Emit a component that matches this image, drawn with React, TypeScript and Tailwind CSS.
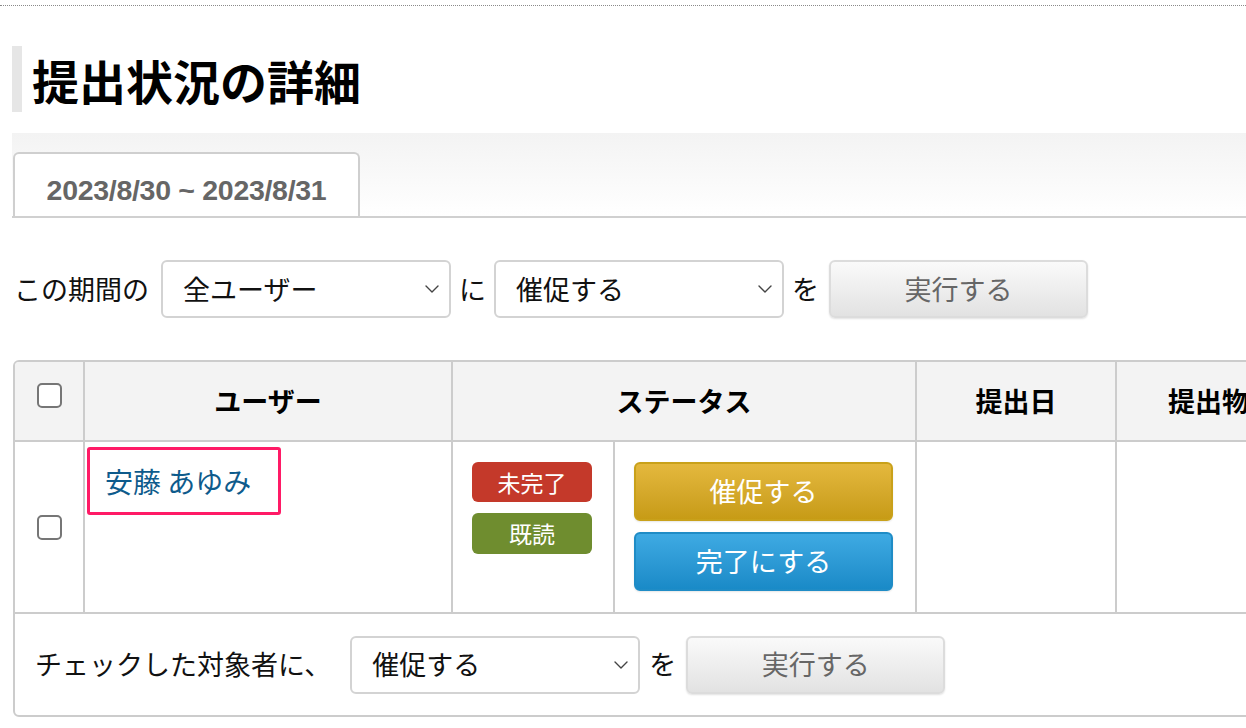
import React from 'react'

const jp = "font-['Noto_Sans_CJK_JP','Hiragino_Sans',sans-serif]"

const Chevron = () => (
  <svg width="14" height="8" viewBox="0 0 14 8" fill="none" className="shrink-0">
    <path d="M1 1l6 6 6-6" stroke="#444" strokeWidth="1.4" strokeLinecap="round" strokeLinejoin="round" />
  </svg>
)

const SelectBox = ({ label }: { label: string }) => (
  <div className="flex h-[58px] w-[290px] shrink-0 items-center justify-between rounded-md border-2 border-[#d3d3d3] bg-white pl-[20px] pr-[10px]">
    <span className="text-[27px] text-[#111]">{label}</span>
    <Chevron />
  </div>
)

const RunButton = () => (
  <button className="h-[58px] w-[259px] shrink-0 rounded-md border-2 border-[#dcdcdc] bg-gradient-to-b from-[#fafafa] to-[#e2e2e2] text-[27px] text-[#666] shadow-[0_1px_2px_rgba(0,0,0,0.12)]">
    実行する
  </button>
)

const Checkbox = () => (
  <div className="h-[25px] w-[25px] rounded-[5px] border-2 border-[#767676] bg-white" />
)

const App = () => {
  return (
    <div className={`h-[728px] w-full overflow-hidden bg-white ${jp}`}>
      <div className="h-[6px] border-b border-dotted border-[#8a8a8a]" />

      {/* page title */}
      <div className="ml-3 mt-[40px] flex h-[66px] items-center border-l-[10px] border-[#e6e6e6] pl-[10px]">
        <h1 className="text-[47px] font-bold leading-none text-black">提出状況の詳細</h1>
      </div>

      {/* period tabs */}
      <div className="ml-3 mt-[21px] flex h-[85px] items-end border-b-2 border-[#d0d0d0] bg-gradient-to-b from-[#f3f3f3] to-white pl-px">
        <div className="flex h-[64px] w-[347px] items-center justify-center rounded-t-md border-2 border-b-0 border-[#cfcfcf] bg-white pt-[10px]">
          <span className="font-['Liberation_Sans',Arial,sans-serif] text-[28.5px] font-bold tracking-[-0.3px] text-[#666]">
            2023/8/30 ~ 2023/8/31
          </span>
        </div>
      </div>

      {/* bulk action for the period */}
      <div className="ml-[14px] mt-[42px] flex items-center text-[27px] text-[#111]">
        <span className="mr-[12px]">この期間の</span>
        <SelectBox label="全ユーザー" />
        <span className="mx-[8px]">に</span>
        <SelectBox label="催促する" />
        <span className="ml-[8px] mr-[10px]">を</span>
        <RunButton />
      </div>

      {/* submission table */}
      <div className="ml-[13px] mt-[42px] w-[1450px] overflow-hidden rounded-md border-2 border-[#cccccc]">
        <table className="w-full table-fixed border-separate border-spacing-0">
          <colgroup>
            <col className="w-[70px]" />
            <col className="w-[368px]" />
            <col className="w-[162px]" />
            <col className="w-[302px]" />
            <col className="w-[200px]" />
            <col />
          </colgroup>
          <thead>
            <tr className="h-[80px] bg-[#f3f3f3] text-[27px] font-bold text-black">
              <th className="border-b-2 border-r-2 border-[#cccccc] align-middle">
                <div className="flex justify-center pb-[12px]">
                  <Checkbox />
                </div>
              </th>
              <th className="border-b-2 border-r-2 border-[#cccccc]">ユーザー</th>
              <th colSpan={2} className="border-b-2 border-r-2 border-[#cccccc]">ステータス</th>
              <th className="border-b-2 border-r-2 border-[#cccccc]">提出日</th>
              <th className="border-b-2 border-[#cccccc] text-left pl-[51px]">提出物</th>
            </tr>
          </thead>
          <tbody>
            <tr className="h-[172px]">
              <td className="border-b-2 border-r-2 border-[#cccccc] align-middle">
                <div className="flex justify-center">
                  <Checkbox />
                </div>
              </td>
              <td className="border-b-2 border-r-2 border-[#cccccc] align-top">
                <div className="ml-[2px] mt-[5px] flex h-[68px] w-[194px] items-center rounded-[3px] border-[3px] border-[#ff1a66] pl-[15px]">
                  <a className="text-[28px] text-[#0e5b8c]">安藤 あゆみ</a>
                </div>
              </td>
              <td className="border-b-2 border-r-2 border-[#cccccc] align-top">
                <div className="ml-[19px] mt-[20px] flex flex-col gap-[11px]">
                  <span className="flex h-[40px] w-[120px] items-center justify-center rounded-md bg-[#c4392a] text-[23px] text-white">未完了</span>
                  <span className="flex h-[41px] w-[120px] items-center justify-center rounded-md bg-[#6f8d2f] text-[23px] text-white">既読</span>
                </div>
              </td>
              <td className="border-b-2 border-r-2 border-[#cccccc] align-top">
                <div className="ml-[19px] mt-[20px] flex flex-col gap-[11px]">
                  <button className="h-[59px] w-[259px] rounded-md border-2 border-[#c9a11a] bg-gradient-to-b from-[#e4b83d] to-[#c79b15] text-[27px] text-white shadow-[0_1px_2px_rgba(0,0,0,0.1)]">
                    催促する
                  </button>
                  <button className="h-[59px] w-[259px] rounded-md border-2 border-[#1f8cc6] bg-gradient-to-b from-[#3eaae3] to-[#198ac7] text-[27px] text-white shadow-[0_1px_2px_rgba(0,0,0,0.1)]">
                    完了にする
                  </button>
                </div>
              </td>
              <td className="border-b-2 border-r-2 border-[#cccccc]" />
              <td className="border-b-2 border-[#cccccc]" />
            </tr>
          </tbody>
        </table>

        {/* bulk action for checked users */}
        <div className="flex h-[101px] items-center pl-[20px] text-[27px] text-[#111]">
          <span className="mr-[19px]">チェックした対象者に、</span>
          <SelectBox label="催促する" />
          <span className="ml-[9px] mr-[10px]">を</span>
          <RunButton />
        </div>
      </div>
    </div>
  )
}

export default App
